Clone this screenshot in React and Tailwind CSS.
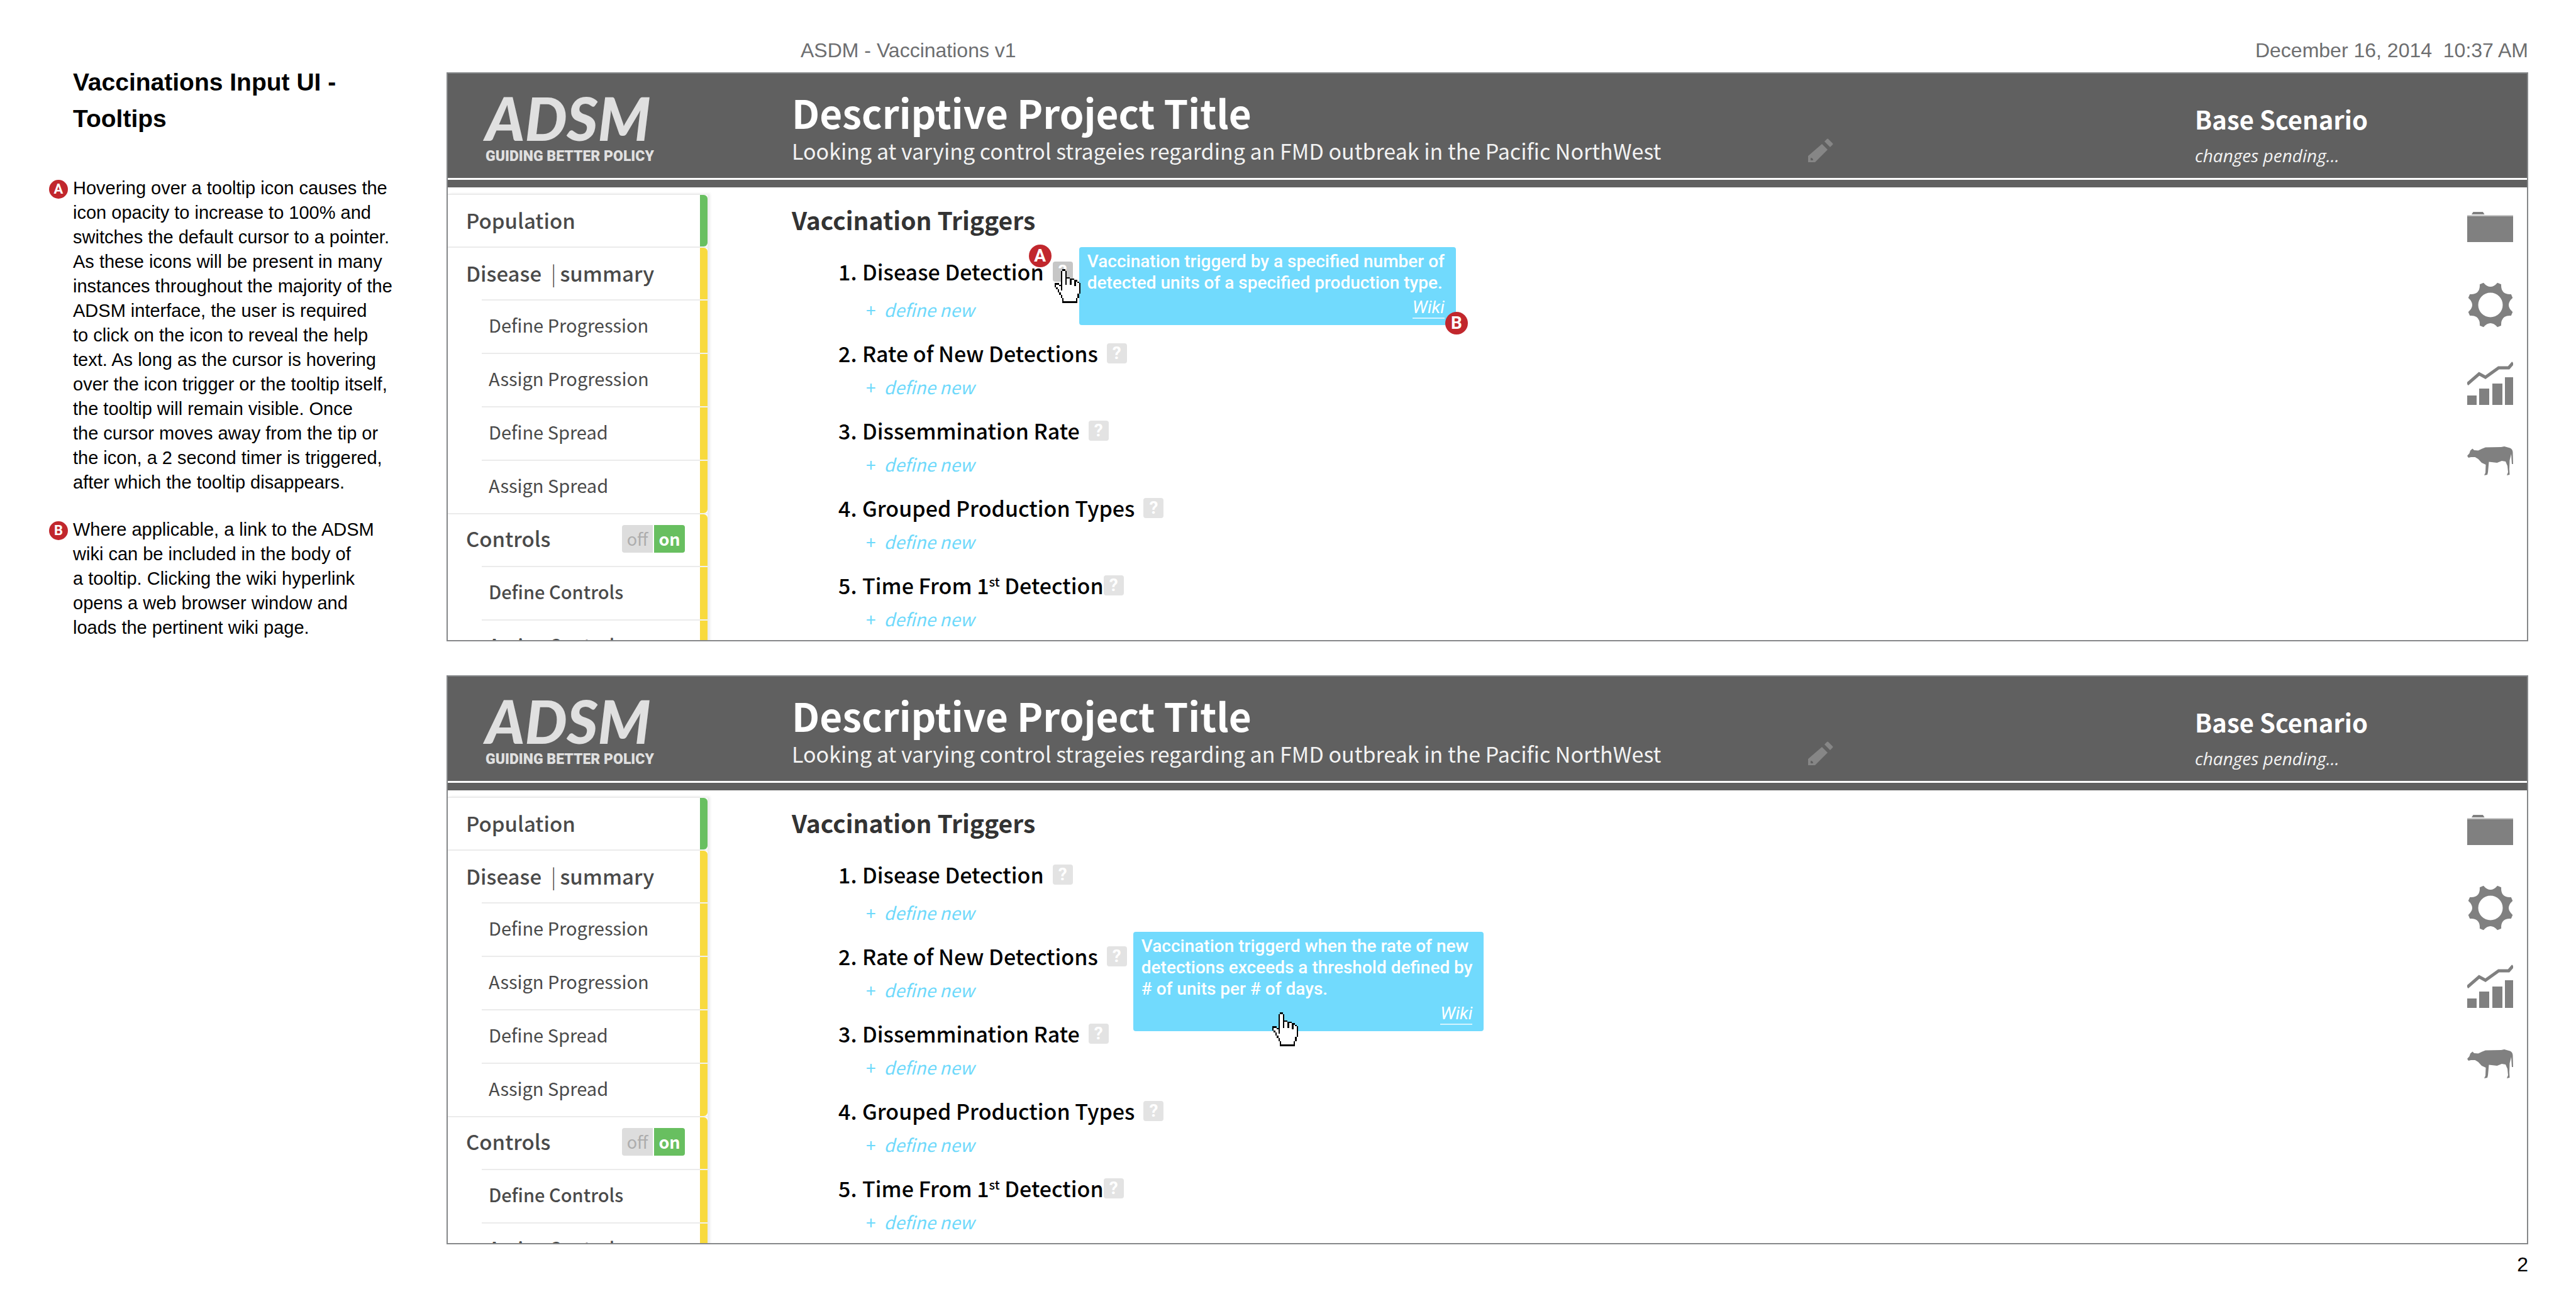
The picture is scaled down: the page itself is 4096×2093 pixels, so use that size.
const SOURCE = 'font-["Noto_Sans_CJK_SC",sans-serif]';

const NAV = [
  { label: "Population", major: true, bar: "bg-[#68bf60]", round: "rounded-r-md" },
  { label: "Disease", extra: "summary", major: true, bar: "bg-[#f8da3e]", round: "rounded-tr-md" },
  { label: "Define Progression", bar: "bg-[#f8da3e]", round: "" },
  { label: "Assign Progression", bar: "bg-[#f8da3e]", round: "" },
  { label: "Define Spread", bar: "bg-[#f8da3e]", round: "" },
  { label: "Assign Spread", bar: "bg-[#f8da3e]", round: "rounded-br-md" },
  { label: "Controls", toggle: true, major: true, bar: "bg-[#f8da3e]", round: "rounded-tr-md" },
  { label: "Define Controls", strong: true, bar: "bg-[#f8da3e]", round: "" },
  { label: "Assign Controls", strong: true, bar: "bg-[#f8da3e]", round: "" },
];

const TRIGGERS = [
  { id: 1, label: "Disease Detection" },
  { id: 2, label: "Rate of New Detections" },
  { id: 3, label: "Dissemmination Rate" },
  { id: 4, label: "Grouped Production Types" },
  { id: 5, label: <>Time From 1<sup className="-top-[12px] text-[20px]">st</sup> Detection</> },
];

const HAND = [
  ".....##..........",
  "....#oo#.........",
  "....#oo#.........",
  "....#oo#.........",
  "....#oo#.........",
  "....#oo###.......",
  "....#oo#oo###....",
  "....#oo#oo#oo##..",
  "....#oo#oo#oo#o#.",
  "###.#oo#oo#oo#oo#",
  "#oo##oooooooo#oo#",
  "#ooo#ooooooooooo#",
  ".#oo#ooooooooooo#",
  "..#o#ooooooooooo#",
  "..#ooooooooooooo#",
  "...#oooooooooooo#",
  "...#ooooooooooo#.",
  "....#oooooooooo#.",
  "....#oooooooooo#.",
  ".....#oooooooo#..",
  ".....#oooooooo#..",
  ".....##########..",
];

function pixels(mark) {
  return HAND.map((row, y) =>
    [...row].map((c, x) => (c === mark ? `M${x} ${y}h1v1h-1z` : "")).join("")
  ).join("");
}

function HandCursor() {
  return (
    <svg viewBox="0 0 17 22" className="h-[54px] w-[41px]" shapeRendering="crispEdges" aria-hidden="true">
      <path d={pixels("o")} fill="#fff" />
      <path d={pixels("#")} fill="#000" />
    </svg>
  );
}

function gearPath() {
  const at = (deg, r) => {
    const a = (deg * Math.PI) / 180;
    return `${(r * Math.cos(a)).toFixed(2)} ${(r * Math.sin(a)).toFixed(2)}`;
  };
  let d = `M${at(17.5, 37)}`;
  for (let k = 0; k < 8; k++) {
    const tooth = 22.5 + 45 * k;
    d += `L${at(tooth + 5, 37)}Q${at(tooth + 22.5, 22.7)} ${at(tooth + 40, 37)}`;
  }
  return d + "ZM19.5 0A19.5 19.5 0 1 0 -19.5 0A19.5 19.5 0 1 0 19.5 0Z";
}

function FolderIcon() {
  return (
    <svg viewBox="0 0 73 48" className="h-[48px] w-[73px]" fill="#808080" aria-hidden="true">
      <path d="M7 4L9.500 0H25L27.500 4Z" />
      <path d="M0 5H73V8H0Z" fill="#c4c4c4" />
      <path d="M0 7H73V48H0Z" />
    </svg>
  );
}

function GearIcon() {
  return (
    <svg viewBox="-38 -36 74 72" className="h-[72px] w-[74px]" fill="#808080" aria-hidden="true">
      <path d={gearPath()} fillRule="evenodd" />
    </svg>
  );
}

function ChartIcon() {
  return (
    <svg viewBox="0 0 73 70" className="h-[70px] w-[73px]" fill="#808080" aria-hidden="true">
      <path d="M0 55H15V70H0ZM19 44H35V70H19ZM40 36H56V70H40ZM60 26H73V70H60Z" />
      <path d="M0 37L19 20.500L29 26L50 11H66L73 3" fill="none" stroke="#808080" strokeWidth="5" />
    </svg>
  );
}

function CowIcon() {
  return (
    <svg viewBox="0 0 73 46" className="h-[46px] w-[73px]" fill="#808080" aria-hidden="true">
      <path d="M0 15L3.500 11L5 6.500L8.500 3.500L11 6L17.500 6.500L24 3.500L29 1.500L54 1L59 0L68 2.500Q72 4 72.500 9L73 28H71L70 12L67.500 22L67 36L67.500 45L63 46L65 41L64 31L61 24L55 23L47.500 26L34.500 24.500L33 41L32 45L27 46L29 42L29.500 29L23 26L17.500 20L12.500 17L6 17L2 18Z" />
    </svg>
  );
}

function PencilIcon() {
  return (
    <svg viewBox="0 0 40 39" className="h-[39px] w-[40px]" fill="#868686" aria-hidden="true">
      <path d="M26 5L30 1Q31 0 32 1L39 8Q40 9 39 10L35 14Z" />
      <path d="M22 9L31 18L11 38H0V28ZM4 31V35H8Q8 31 4 31Z" fillRule="evenodd" />
    </svg>
  );
}

function Badge({ children, size = "size-[36px] text-[28px]" }) {
  return (
    <span className={`flex shrink-0 items-center justify-center rounded-full bg-[#c1272d] font-["Roboto",sans-serif] leading-none font-bold text-white ${size}`}>
      {children}
    </span>
  );
}

function Note({ mark, children }) {
  return (
    <div className="flex gap-[8px] pl-[78px]">
      <div className="pt-[6px]">
        <Badge size="size-[30px] text-[22px]">{mark}</Badge>
      </div>
      <p className="text-[29px] leading-[39px] whitespace-pre-line text-black">{children}</p>
    </div>
  );
}

function Tooltip({ children, badge }) {
  return (
    <div role="tooltip" className="absolute -top-[23px] left-[42px] z-10 w-max rounded-[4px] bg-[#71dafd] pt-[6px] pr-[18px] pb-[10px] pl-[13px] font-['Roboto',sans-serif] text-[28px] leading-[34px] font-medium text-white">
      <p className="whitespace-pre-line">{children}</p>
      <div className="mt-[6px] flex justify-end">
        <a href="#wiki" className="border-b-2 border-[#d3f3fe] leading-[32px] font-normal italic">Wiki</a>
      </div>
      {badge && <span className="absolute -right-[19px] -bottom-[15px]"><Badge>{badge}</Badge></span>}
    </div>
  );
}

function HelpButton({ active, children, tight }) {
  return (
    <div className={`relative ${tight ? "" : "ml-[14px]"}`}>
      <button
        type="button"
        aria-label="Help"
        className={`flex size-[32px] items-center justify-center rounded-[4px] font-["Roboto",sans-serif] text-[28px] leading-none font-bold text-white ${active ? "bg-[#c6c6c6]" : "bg-[#e3e3e3]"}`}
      >
        ?
      </button>
      {children}
    </div>
  );
}

function Toggle() {
  return (
    <div className="mr-[24px] ml-auto flex gap-[2px] text-[27px] leading-[44px]">
      <button type="button" className="h-[44px] w-[49px] rounded-l-[4px] bg-[#dddddd] pb-px font-normal text-[#adadad]">off</button>
      <button type="button" className="h-[44px] w-[49px] rounded-r-[4px] bg-[#68bf60] pb-px font-bold text-white">on</button>
    </div>
  );
}

function NavRow({ item }) {
  return (
    <li className={`flex ${item.major ? "h-[84px]" : "h-[85px]"}`}>
      <div className={`flex flex-1 items-center border-t-2 border-[#ebebeb] text-[#4a4a4a] ${item.major ? "pl-[29px] text-[33px] font-medium" : "ml-[54px] pb-[6px] pl-[11px] text-[29px]"} ${item.toggle ? "pb-1" : ""} ${item.strong ? "font-medium" : ""}`}>
        <a href="#section">{item.label}</a>
        {item.extra && (
          <>
            <span className="ml-[15px] font-light">|</span>
            <a href="#summary" className="ml-[6px]">{item.extra}</a>
          </>
        )}
        {item.toggle && <Toggle />}
      </div>
      <div className="w-[12px] border-t-2 border-[#f1f1f1]">
        <div className={`h-full ${item.bar} ${item.round}`} />
      </div>
    </li>
  );
}

function Screen({ tips, hovered }) {
  return (
    <section className={`max-h-[905px] overflow-hidden border-2 border-[#858789] bg-white ${SOURCE}`}>
      <header className="bg-[#606060]">
        <div className="grid h-[166px] grid-cols-[547px_1616fr_615fr_528fr] text-white">
          <div className="pt-[23px] pl-[60px] text-[#e0e0e0]">
            <div className="font-['Lato',sans-serif] text-[95px] leading-none font-black italic">ADSM</div>
            <div className="mt-0.5 font-['Roboto',sans-serif] text-[23px] leading-[24px] font-black whitespace-nowrap">GUIDING BETTER POLICY</div>
          </div>
          <div className="pt-[25px] whitespace-nowrap">
            <h2 className="text-[62px] leading-[72px] font-bold">Descriptive Project Title</h2>
            <p className="mt-1 text-[34px] leading-[44px] text-[#f2f2f2]">
              Looking at varying control strageies regarding an FMD outbreak in the Pacific NorthWest
            </p>
          </div>
          <div className="pt-[103px]">
            <button type="button" aria-label="Edit project"><PencilIcon /></button>
          </div>
          <div className="pt-[48px]">
            <div className="text-[40px] leading-[48px] font-bold">Base Scenario</div>
            <div className="mt-4 font-['Open_Sans',sans-serif] text-[28px] leading-[36px] text-[#f2f2f2] italic">changes pending...</div>
          </div>
        </div>
        <div className="h-[15px] border-t-3 border-white" />
      </header>
      <div className="flex items-start">
        <nav className="mt-[10px] w-[413px] shrink-0 shadow-[4px_0_4px_rgba(0,0,0,0.08)]">
          <ul>
            {NAV.map((item) => <NavRow key={item.label} item={item} />)}
          </ul>
        </nav>
        <div className="flex-1 pt-[25px] pl-[134px]">
          <h3 className="text-[39px] leading-[52px] font-bold text-[#333]">Vaccination Triggers</h3>
          <ol className="mt-[35px] flex flex-col gap-[30px] pl-[74px]">
            {TRIGGERS.map((t) => (
              <li key={t.id}>
                <div className="flex items-center text-[34px] leading-[44px] font-medium text-black">
                  <span className="w-[38px]">{t.id}.</span>
                  <span>{t.label}</span>
                  <HelpButton active={hovered === t.id} tight={t.id === 5}>{tips[t.id]}</HelpButton>
                </div>
                <button type="button" className={`flex gap-[13px] pl-[44px] text-[28px] leading-[36px] text-[#6ed9fb] ${t.id === 1 ? "mt-[20px]" : "mt-[13px]"}`}>
                  <span>+</span>
                  <span className="italic">define new</span>
                </button>
              </li>
            ))}
          </ol>
        </div>
        <div className="flex flex-col pt-px pr-[22px]">
          {[["Files", FolderIcon], ["Settings", GearIcon], ["Results", ChartIcon], ["Livestock", CowIcon]].map(([name, Icon]) => (
            <button key={name} type="button" aria-label={name} className="flex h-[124px] items-center justify-end">
              <Icon />
            </button>
          ))}
        </div>
      </div>
    </section>
  );
}

export default function App() {
  return (
    <div className="flex min-h-screen bg-white font-['Liberation_Sans',sans-serif]">
      <aside className="w-[710px] shrink-0 pt-[102px]">
        <h1 className="pl-[116px] text-[39px] leading-[58px] font-bold text-black">
          Vaccinations Input UI -<br />Tooltips
        </h1>
        <div className="mt-[62px] flex flex-col gap-[36px]">
          <Note mark="A">
            {`Hovering over a tooltip icon causes the
              icon opacity to increase to 100% and
              switches the default cursor to a pointer.
              As these icons will be present in many
              instances throughout the majority of the
              ADSM interface, the user is required
              to click on the icon to reveal the help
              text. As long as the cursor is hovering
              over the icon trigger or the tooltip itself,
              the tooltip will remain visible. Once
              the cursor moves away from the tip or
              the icon, a 2 second timer is triggered,
              after which the tooltip disappears.`}
          </Note>
          <Note mark="B">
            {`Where applicable, a link to the ADSM
              wiki can be included in the body of
              a tooltip. Clicking the wiki hyperlink
              opens a web browser window and
              loads the pertinent wiki page.`}
          </Note>
        </div>
      </aside>
      <main className="min-w-0 flex-1 pt-[60px] pr-[76px]">
        <div className="flex justify-between pb-[15px] pl-[563px] text-[32px] leading-[40px] text-[#6d6e70]">
          <span>ASDM - Vaccinations v1</span>
          <span className="whitespace-pre">December 16, 2014  10:37 AM</span>
        </div>
        <div className="flex flex-col gap-[54px]">
          <Screen
            hovered={1}
            tips={{
              1: (
                <>
                  <Tooltip badge="B">{`Vaccination triggerd by a specified number of
                    detected units of a specified production type.`}</Tooltip>
                  <span className="absolute -top-[27px] -left-[38px] z-10"><Badge>A</Badge></span>
                  <span className="absolute top-[12px] left-[3px] z-20"><HandCursor /></span>
                </>
              ),
            }}
          />
          <Screen
            tips={{
              2: (
                <>
                  <Tooltip>{`Vaccination triggerd when the rate of new
                    detections exceeds a threshold defined by
                    # of units per # of days.`}</Tooltip>
                  <span className="absolute top-[105px] left-[263px] z-20"><HandCursor /></span>
                </>
              ),
            }}
          />
        </div>
        <div className="pt-[12px] text-right text-[32px] leading-[40px] text-black">2</div>
      </main>
    </div>
  );
}
